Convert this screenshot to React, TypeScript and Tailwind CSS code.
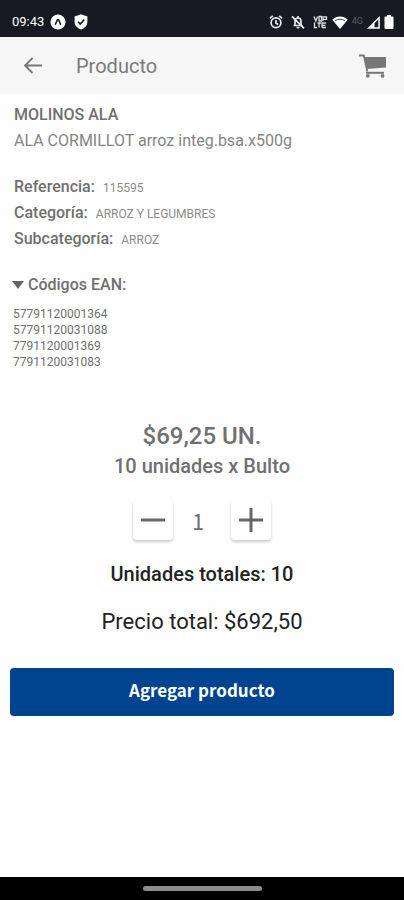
import React, { useState } from "react";

type DetailRow = {
  label: string;
  value: string;
};

const DETAILS: DetailRow[] = [
  { label: "Referencia:", value: "115595" },
  { label: "Categoría:", value: "ARROZ Y LEGUMBRES" },
  { label: "Subcategoría:", value: "ARROZ" },
];

const EAN_CODES = [
  "57791120001364",
  "57791120031088",
  "7791120001369",
  "7791120031083",
];

const UNIT_PRICE = 69.25;
const UNITS_PER_PACK = 10;

const formatPrice = (value: number) => `$${value.toFixed(2).replace(".", ",")}`;

const StatusBar = () => (
  <div className="flex h-[37px] shrink-0 items-center bg-[#171a23] pt-[7px] pr-[10px] pl-3 text-white">
    <span className="text-[13px] leading-4">09:43</span>

    <div className="ml-[6px] flex items-center gap-2">
      <svg className="h-4 w-4" viewBox="0 0 16 16">
        <circle cx="8" cy="8" r="7.6" fill="#fff" />
        <path
          d="M5.200 10.800 7.400 5.800h1.200l2.200 5"
          fill="none"
          stroke="#171a23"
          strokeWidth="1.6"
        />
      </svg>
      <svg className="h-4 w-[14px]" viewBox="0 0 14 16">
        <path
          d="M7 .3 13.4 2.6v5.2c0 3.6-2.6 6.2-6.4 7.8C3.2 14 .6 11.4.6 7.8V2.6z"
          fill="#fff"
        />
        <path
          d="m4 7.8 2.2 2.2L10.3 5.6"
          fill="none"
          stroke="#171a23"
          strokeWidth="1.6"
        />
      </svg>
    </div>

    <div className="ml-auto flex items-center">
      {/* Alarm */}
      <svg
        className="mr-2 h-[14px] w-[14px]"
        viewBox="0 0 14 14"
        fill="none"
        stroke="#e8e9ec"
        strokeWidth="1.7"
      >
        <circle cx="7" cy="7.8" r="4.9" />
        <path d="M7 5v3.2l2.2 1.2M.8 3.3 3.8.9M13.2 3.3 10.2.9" />
      </svg>

      {/* Muted bell */}
      <svg className="mr-2 h-[14px] w-[14px]" viewBox="0 0 14 14" fill="none">
        <path
          d="M2.500 10.500h9M4 10V6.200C4 4.300 5.200 3 7 3s3 1.300 3 3.200V10M7 1v2"
          stroke="#e8e9ec"
          strokeWidth="1.7"
        />
        <path d="M5.400 12h3.200A1.600 1.600 0 0 1 5.400 12z" fill="#e8e9ec" />
        <path d="m1 1.300 12 12" stroke="#e8e9ec" strokeWidth="1.7" />
      </svg>

      {/* Voice over wifi */}
      <svg
        className="mr-1 h-[14px] w-[15px]"
        viewBox="0 0 15 14"
        fill="none"
        stroke="#dcdde1"
        strokeWidth="1.3"
      >
        <path d="m1 1.5 1.8 4.5L4.6 1.5M6 1.5h2.5v4.5H6zM10 6V1.8h3.5v2.5H10M1.5 7.5v5H4M6 7.5v5M4.5 8H8M9 12.500V8h4M9 10.300h3.500M9 12.500h4" />
      </svg>

      {/* Wifi */}
      <svg className="mr-1 h-[13px] w-[16px]" viewBox="0 0 16 13">
        <path d="M8 13 .3 3.8C2.3 1.7 5 .5 8 .5s5.7 1.2 7.7 3.3z" fill="#fff" />
        <path
          d="M3.2 4.6C6 2.7 10 2.7 12.8 4.6"
          fill="none"
          stroke="#171a23"
          strokeWidth=".8"
        />
      </svg>

      <span className="mr-1 self-start text-[9px] leading-3 text-[#5b5e66]">4G</span>

      {/* Signal */}
      <svg className="mr-1 h-[13px] w-[13px]" viewBox="0 0 13 13">
        <path d="M0 12.8 12.8 0v12.8z" fill="#fff" />
        <path d="M7.500 11.300V7.300l3.800-3.800v7.800z" fill="#171a23" />
      </svg>

      {/* Battery */}
      <svg className="h-[14px] w-[10px]" viewBox="0 0 10 14">
        <path
          d="M3 0h4v1.500h1.500q1 0 1 1V13q0 1-1 1h-7q-1 0-1-1V2.500q0-1 1-1H3z"
          fill="#fff"
        />
      </svg>
    </div>
  </div>
);

const TopBar = () => (
  <header className="flex h-[57px] shrink-0 items-center bg-[#f6f6f6] pr-4 pl-5">
    <button type="button" aria-label="Volver" className="p-1">
      <svg
        className="h-5 w-5"
        viewBox="0 0 20 20"
        fill="none"
        stroke="#777"
        strokeWidth="1.8"
      >
        <path d="M18 9.500H1M8.500 2 1 9.500 8.500 17" />
      </svg>
    </button>
    <h1 className="ml-7 text-[20px] leading-6 text-[#7b7b7b]">Producto</h1>
    <button type="button" aria-label="Ver carrito" className="ml-auto pr-px">
      <svg className="h-6 w-7" viewBox="0 0 28 24">
        <path
          d="M0 1.500h4.800L8.300 17.500"
          fill="none"
          stroke="#777"
          strokeWidth="1.8"
        />
        <path d="M5.500 3h21.500v10.500L8 15z" fill="#777" />
        <path d="M7.200 17.800h17.800v2H7.200z" fill="#777" />
        <circle cx="8.800" cy="21.800" r="1.900" fill="#777" />
        <circle cx="23.500" cy="21.800" r="1.900" fill="#777" />
      </svg>
    </button>
  </header>
);

const App = () => {
  const [quantity, setQuantity] = useState(1);
  const [eanOpen, setEanOpen] = useState(true);

  const totalUnits = quantity * UNITS_PER_PACK;

  const handleQuantityChange = (e: React.ChangeEvent<HTMLInputElement>) => {
    const next = parseInt(e.target.value, 10);
    setQuantity(Number.isNaN(next) ? 1 : Math.max(1, next));
  };

  return (
    <div className="flex min-h-screen flex-col bg-[#fefefe] font-[Roboto,sans-serif] text-[#707070]">
      <StatusBar />
      <TopBar />

      <main className="flex flex-1 flex-col pt-2">
        <section className="px-[14px]">
          <h2 className="text-[16px] leading-[26px] font-medium">MOLINOS ALA</h2>
          <p className="text-[16px] leading-[26px] text-[#858585]">
            ALA CORMILLOT arroz integ.bsa.x500g
          </p>

          <dl className="mt-5">
            {DETAILS.map((row) => (
              <div
                key={row.label}
                className="flex h-[26px] items-baseline gap-2 leading-[26px]"
              >
                <dt className="text-[16px] font-medium">{row.label}</dt>
                <dd className="text-[12px] text-[#8c8c8c]">{row.value}</dd>
              </div>
            ))}
          </dl>
        </section>

        <section className="mt-5 px-3">
          <button
            type="button"
            aria-expanded={eanOpen}
            onClick={() => setEanOpen((prev) => !prev)}
            className="flex items-center gap-1 text-[16px] leading-[26px] font-medium"
          >
            <svg className="h-2 w-3" viewBox="0 0 12 8">
              <path d="M0 0h12L6 8z" fill="#666" />
            </svg>
            Códigos EAN:
          </button>
          {eanOpen && (
            <ul className="mt-2 px-px text-[12px] leading-4">
              {EAN_CODES.map((code) => (
                <li key={code}>{code}</li>
              ))}
            </ul>
          )}
        </section>

        <section className="mt-[50px] flex flex-col items-center">
          <p className="text-[24px] leading-8 font-medium">
            {formatPrice(UNIT_PRICE)} UN.
          </p>
          <p className="text-[20px] leading-7 font-medium">
            {UNITS_PER_PACK} unidades x Bulto
          </p>

          <div className="mt-5 flex items-center gap-[18px]">
            <button
              type="button"
              aria-label="Quitar"
              onClick={() => setQuantity((prev) => Math.max(1, prev - 1))}
              className="flex h-10 w-10 items-center justify-center rounded-sm bg-white shadow-[0_2px_3px_rgba(0,0,0,0.2)]"
            >
              <svg className="h-6 w-6" viewBox="0 0 24 24">
                <path d="M0 12h24" stroke="#666" strokeWidth="3" />
              </svg>
            </button>
            <input
              type="text"
              inputMode="numeric"
              aria-label="Cantidad"
              value={quantity}
              onChange={handleQuantityChange}
              className="h-10 w-[22px] bg-transparent pr-2 text-center font-['Noto_Sans_CJK_SC',sans-serif] text-[22px] outline-none"
            />
            <button
              type="button"
              aria-label="Agregar"
              onClick={() => setQuantity((prev) => prev + 1)}
              className="flex h-10 w-10 items-center justify-center rounded-sm bg-white shadow-[0_2px_3px_rgba(0,0,0,0.2)]"
            >
              <svg className="h-6 w-6" viewBox="0 0 24 24">
                <path d="M0 12h24M12 0v24" stroke="#666" strokeWidth="3" />
              </svg>
            </button>
          </div>

          <p className="mt-5 text-[20px] leading-7 font-medium text-[#222]">
            Unidades totales: {totalUnits}
          </p>
          <p className="mt-5 text-[22px] leading-7 text-[#222]">
            Precio total: {formatPrice(totalUnits * UNIT_PRICE)}
          </p>
        </section>

        <div className="mt-8 px-[10px]">
          <button
            type="button"
            className="h-12 w-full rounded-sm bg-[#00438f] pb-1 font-['Noto_Sans_CJK_SC',sans-serif] text-[17px] font-bold text-white"
          >
            Agregar producto
          </button>
        </div>
      </main>

      {/* Gesture navigation */}
      <div className="flex h-[23px] shrink-0 items-center justify-center bg-black">
        <div className="h-[5px] w-[119px] rounded-full bg-[#8c8c8c]" />
      </div>
    </div>
  );
};

export default App;
